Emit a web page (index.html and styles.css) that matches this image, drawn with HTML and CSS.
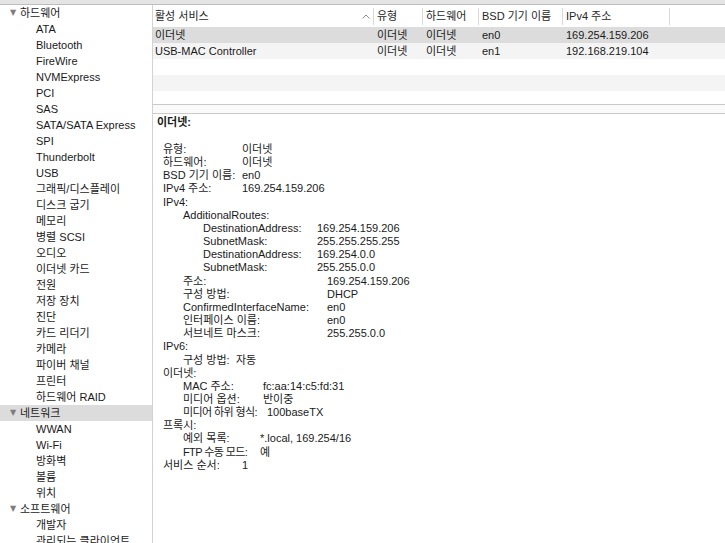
FILE: index.html
```html
<!DOCTYPE html>
<html lang="ko">
<head>
<meta charset="utf-8">
<title>시스템 정보</title>
<link rel="stylesheet" href="styles.css">
</head>
<body>
<div class="window">
  <div class="topbar"></div>
  <div class="content">
    <nav class="sidebar">
      <div class="row group"><span class="tri">▼</span>하드웨어</div>
      <div class="row item">ATA</div>
      <div class="row item">Bluetooth</div>
      <div class="row item">FireWire</div>
      <div class="row item">NVMExpress</div>
      <div class="row item">PCI</div>
      <div class="row item">SAS</div>
      <div class="row item">SATA/SATA Express</div>
      <div class="row item">SPI</div>
      <div class="row item">Thunderbolt</div>
      <div class="row item">USB</div>
      <div class="row item">그래픽/디스플레이</div>
      <div class="row item">디스크 굽기</div>
      <div class="row item">메모리</div>
      <div class="row item">병렬 SCSI</div>
      <div class="row item">오디오</div>
      <div class="row item">이더넷 카드</div>
      <div class="row item">전원</div>
      <div class="row item">저장 장치</div>
      <div class="row item">진단</div>
      <div class="row item">카드 리더기</div>
      <div class="row item">카메라</div>
      <div class="row item">파이버 채널</div>
      <div class="row item">프린터</div>
      <div class="row item">하드웨어 RAID</div>
      <div class="row group selected"><span class="tri">▼</span>네트워크</div>
      <div class="row item">WWAN</div>
      <div class="row item">Wi-Fi</div>
      <div class="row item">방화벽</div>
      <div class="row item">볼륨</div>
      <div class="row item">위치</div>
      <div class="row group"><span class="tri">▼</span>소프트웨어</div>
      <div class="row item">개발자</div>
      <div class="row item">관리되는 클라이언트</div>
    </nav>
    <main class="main">
      <div class="table">
        <div class="thead">
          <div class="th first"><span>활성 서비스</span><svg class="sort" width="8" height="5" viewBox="0 0 8 5"><path d="M0.5 4.5 L4 1 L7.5 4.5" fill="none" stroke="#8a8a8a" stroke-width="1"/></svg></div>
          <div class="th">유형</div>
          <div class="th">하드웨어</div>
          <div class="th">BSD 기기 이름</div>
          <div class="th">IPv4 주소</div>
          <div class="th last"></div>
        </div>
        <div class="tr selected">
          <div class="td first">이더넷</div>
          <div class="td">이더넷</div>
          <div class="td">이더넷</div>
          <div class="td">en0</div>
          <div class="td">169.254.159.206</div>
          <div class="td"></div>
        </div>
        <div class="tr alt">
          <div class="td first">USB-MAC Controller</div>
          <div class="td">이더넷</div>
          <div class="td">이더넷</div>
          <div class="td">en1</div>
          <div class="td">192.168.219.104</div>
          <div class="td"></div>
        </div>
        <div class="tr"></div>
        <div class="tr alt"></div>
        <div class="tr short"></div>
      </div>
      <div class="splitter"></div>
      <section class="detail">
        <div class="title">이더넷:</div>
        <div class="list">
          <div class="kv l0"><span class="k w79">유형:</span><span>이더넷</span></div>
          <div class="kv l0"><span class="k w79">하드웨어:</span><span>이더넷</span></div>
          <div class="kv l0"><span class="k w79">BSD 기기 이름:</span><span>en0</span></div>
          <div class="kv l0"><span class="k w79">IPv4 주소:</span><span>169.254.159.206</span></div>
          <div class="kv l0"><span>IPv4:</span></div>
          <div class="kv l1"><span>AdditionalRoutes:</span></div>
          <div class="kv l2"><span class="k w114">DestinationAddress:</span><span>169.254.159.206</span></div>
          <div class="kv l2"><span class="k w114">SubnetMask:</span><span>255.255.255.255</span></div>
          <div class="kv l2"><span class="k w114">DestinationAddress:</span><span>169.254.0.0</span></div>
          <div class="kv l2"><span class="k w114">SubnetMask:</span><span>255.255.0.0</span></div>
          <div class="kv l1"><span class="k w144">주소:</span><span>169.254.159.206</span></div>
          <div class="kv l1"><span class="k w144">구성 방법:</span><span>DHCP</span></div>
          <div class="kv l1"><span class="k w144">ConfirmedInterfaceName:</span><span>en0</span></div>
          <div class="kv l1"><span class="k w144">인터페이스 이름:</span><span>en0</span></div>
          <div class="kv l1"><span class="k w144">서브네트 마스크:</span><span>255.255.0.0</span></div>
          <div class="kv l0"><span>IPv6:</span></div>
          <div class="kv l1"><span class="k w53">구성 방법:</span><span>자동</span></div>
          <div class="kv l0"><span>이더넷:</span></div>
          <div class="kv l1"><span class="k w80">MAC 주소:</span><span>fc:aa:14:c5:fd:31</span></div>
          <div class="kv l1"><span class="k w80">미디어 옵션:</span><span>반이중</span></div>
          <div class="kv l1"><span class="k w84 tight">미디어 하위 형식:</span><span>100baseTX</span></div>
          <div class="kv l0"><span>프록시:</span></div>
          <div class="kv l1"><span class="k w77">예외 목록:</span><span>*.local, 169.254/16</span></div>
          <div class="kv l1"><span class="k w77 tight">FTP 수동 모드:</span><span>예</span></div>
          <div class="kv l0"><span class="k w79">서비스 순서:</span><span>1</span></div>
        </div>
      </section>
    </main>
  </div>
</div>
</body>
</html>
```

FILE: styles.css
```css
* { box-sizing: border-box; }
html, body { margin: 0; padding: 0; }
body {
  font-family: "Liberation Sans", "Noto Sans CJK KR", sans-serif;
  font-size: 11px;
  color: #1a1a1a;
  background: #ffffff;
}
.window {
  width: 725px;
  height: 543px;
  display: flex;
  flex-direction: column;
  overflow: hidden;
}
.topbar {
  height: 5px;
  flex: none;
  background: #e4e4e4;
  border-bottom: 1px solid #bdbdbd;
}
.content {
  flex: 1;
  display: flex;
  min-height: 0;
}
.sidebar {
  width: 153px;
  flex: none;
  border-right: 1px solid #d2d2d2;
  overflow: hidden;
  background: #ffffff;
}
.row {
  height: 16px;
  line-height: 16px;
  white-space: nowrap;
}
.row.group { padding-left: 10px; }
.row.item { padding-left: 36px; }
.row.selected { background: #dcdcdc; }
.tri {
  display: inline-block;
  width: 10px;
  color: #7e7e7e;
  font-family: "DejaVu Sans", sans-serif;
  font-size: 8px;
  vertical-align: top;
}
.main {
  flex: 1;
  display: flex;
  flex-direction: column;
  min-width: 0;
}
.table {
  height: 100px;
  flex: none;
  border-bottom: 1px solid #c9c9c9;
  overflow: hidden;
}
.thead, .tr {
  display: grid;
  grid-template-columns: 220px 49px 56px 84px 107px 1fr;
}
.thead {
  height: 22px;
  align-items: center;
  color: #262626;
  padding-top: 1px;
}
.th {
  height: 17px;
  line-height: 17px;
  padding-left: 3px;
  border-left: 1px solid #dadada;
  white-space: nowrap;
}
.th.first {
  border-left: none;
  padding-left: 2px;
  padding-right: 3px;
  display: flex;
  justify-content: space-between;
  align-items: center;
}
.th.last { border-left: 1px solid #dadada; }
.sort { display: block; }
.tr {
  height: 16px;
  line-height: 16px;
}
.tr.short { height: 14px; }
.tr.selected { background: #dcdcdc; }
.tr.alt { background: #f4f4f4; }
.td {
  padding-left: 4px;
  white-space: nowrap;
  overflow: hidden;
}
.td.first { padding-left: 2px; }
.splitter {
  height: 9px;
  flex: none;
  background: #fafafa;
  border-bottom: 1px solid #cbcbcb;
}
.detail {
  flex: 1;
  padding: 0 0 0 4px;
}
.title {
  font-weight: bold;
  height: 14px;
  line-height: 14px;
  margin-top: 1px;
}
.list {
  margin-top: 14px;
}
.kv {
  display: flex;
  height: 13.17px;
  line-height: 13px;
  white-space: nowrap;
}
.l0 { padding-left: 6px; }
.l1 { padding-left: 26px; }
.l2 { padding-left: 46px; }
.k { flex: none; }
.tight { letter-spacing: -0.6px; }
.w53 { width: 53px; }
.w77 { width: 77px; }
.w79 { width: 79px; }
.w80 { width: 80px; }
.w84 { width: 84px; }
.w114 { width: 114px; }
.w144 { width: 144px; }
```
